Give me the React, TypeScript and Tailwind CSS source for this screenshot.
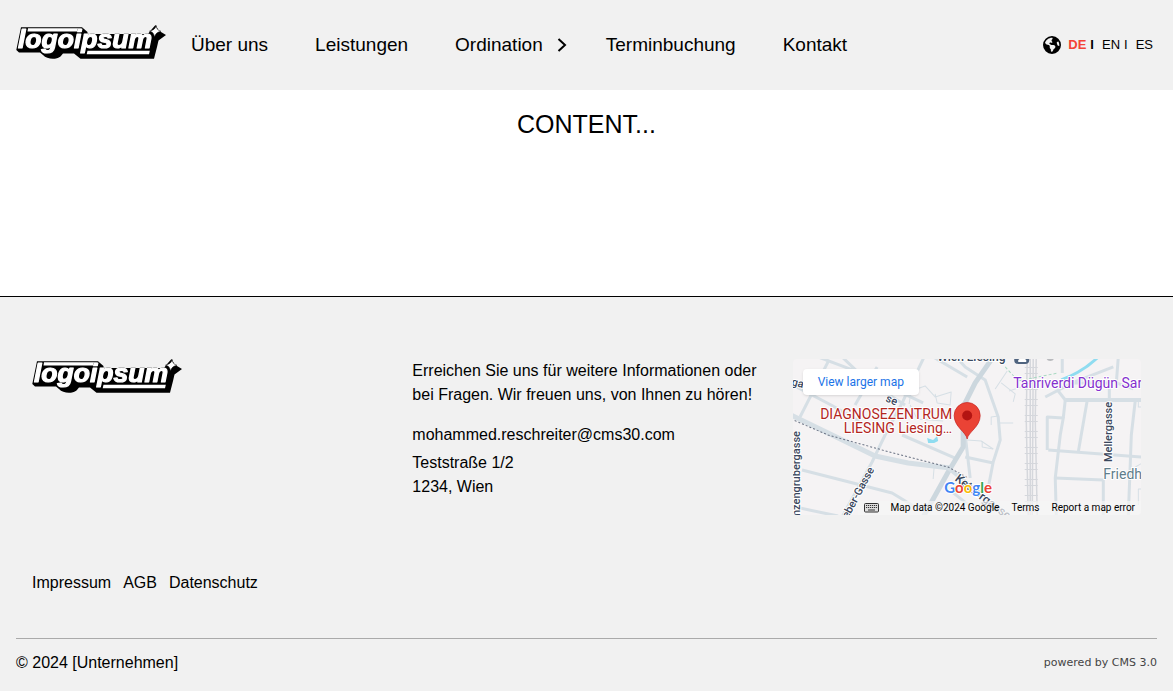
import React from 'react';
import { FaEarthAmericas } from 'react-icons/fa6';

const navItems = [
  { label: 'Über uns', href: '#ueber-uns' },
  { label: 'Leistungen', href: '#leistungen' },
  { label: 'Ordination', href: '#ordination', hasChildren: true },
  { label: 'Terminbuchung', href: '#terminbuchung' },
  { label: 'Kontakt', href: '#kontakt' },
];

const Logo: React.FC = () => (
  <svg viewBox="0 0 150 34" className="block w-[150px] h-[34px] shrink-0" role="img" aria-label="logoipsum">
    {/* extruded base */}
    <path
      d="M5 2.3H66L71.500 7V9H132L134 6.200 139.500 0 142.500 5.500 150 10 142.500 15.500 141 22 138 33.800H64.500L58 28.500H47L44.500 31.500C40 35 31 34.500 27 30L24 27.500H3L.3 25Z"
      fill="#000"
    />
    <path d="M12 3.300H65L64.300 6.500H11.500Z" fill="#fff" />
    <path d="M71.500 25.800H133.800L133 29.300H70.700Z" fill="#fff" />
    <text
      x="2"
      y="23.300"
      className="[filter:drop-shadow(0_0_0.5px_#000)]"
      fontFamily="'Liberation Sans', Arial, sans-serif"
      fontWeight="700"
      fontStyle="italic"
      fontSize="26.500"
      fill="#fff"
      stroke="#fff"
      strokeWidth="1.200"
      strokeLinejoin="round"
    >
      logoipsum
    </text>
    <path
      d="M140.300.6C140.500 3.500 141.500 5.200 145 6.300 141.500 7 139.500 8.500 138.500 12 137.800 8.500 137 7 133.500 6.200 137.500 5.200 139.300 3.800 140.300.6Z"
      fill="#fff"
      stroke="#000"
      strokeWidth=".5"
    />
  </svg>
);

const localRoads = [
  'M7 58 36 1',
  'M25 -2 62 12 130 44',
  'M49 -2 74 22 112 46',
  'M84 8 62 46',
  'M131 -2 110 42 92 76 79 103 49 158',
  'M0 26 38 46 66 62',
  'M140 -2 174 18',
  'M9 111 60 124 99 134 122 148',
  'M7 149 45 157',
  'M109 76 162 99',
  'M163 -2 172 8 192 21 205 58 207 81 200 103 195 129',
  'M172 98 200 104',
  'M172 76 177 119',
  'M254 91V58L270 59 267 76 262 119 263 156',
  'M255 91 349 98',
  'M272 41 270 59',
  'M262 119 310 121V156',
  'M294 41 285 93',
  'M342 41 338 76 335 156',
  'M325 -2 323 24 340 30',
  'M252 38 279 24 316 24V41',
  'M269 -2V14',
  'M265 32 272 41',
  'M279 24 320 8',
  'M158 132 178 148',
];

const footpaths = [
  'M116 45 118 32 132 27 142 38 158 33 157 46 144 44 142 35',
  'M117 46 124 60 150 62',
  'M205 64H220',
  'M198 66V58L205 57',
  'M174 81 188 82 200 90',
  'M189 82V88L200 90',
  'M141 108 140 120',
  'M202 30 214 12',
  'M208 24 222 35 220 43',
  'M216 32 228 28',
  'M349 48H345V40',
  'M349 104 342 108',
  'M349 130H345V146',
];

const LocationMap: React.FC = () => (
  <div className="relative h-[156px] overflow-hidden rounded bg-[#f5f3f4]">
    <svg
      viewBox="0 0 348 156"
      preserveAspectRatio="xMidYMid slice"
      className="block w-full h-full"
      role="img"
      aria-label="Karte"
      fontFamily="Roboto, sans-serif"
    >
      <g fill="none" stroke="#d6dfe5" strokeLinejoin="round">
        <g strokeWidth="1">
          {footpaths.map((d) => <path key={d} d={d} />)}
        </g>
        <g strokeWidth="3">
          {localRoads.map((d) => <path key={d} d={d} />)}
        </g>
        <path d="M-2 56 35 74 82 97 115 104 157 109" strokeWidth="5" />
        <path d="M130 158 155 113 170 88V48L182 24 200 -2" strokeWidth="5" stroke="#ccd7de" />
        <path d="M155 109 214 156" strokeWidth="4" />
        <path d="M272 41H349" strokeWidth="4" />
      </g>

      {/* railway */}
      <g fill="none" stroke="#d5d7dc">
        <path d="M234 -2 233 60 235 158M237 -2V158M240 -2 239 158M243 -2 242 60 244 158" strokeWidth="1.500" />
        <path d="M238 -2V158" strokeWidth="13" strokeDasharray="1 9 1 5" />
      </g>

      <path d="M268 21C278 17 290 12 304 -1" fill="none" stroke="#8fdcf0" strokeWidth="3" />
      <path d="M134 79 140 81 144 77 145 82 141 84H135Z" fill="#8fdcf0" />
      <path d="M212 8 225 22 265 14" fill="none" stroke="#a9d9c2" strokeDasharray="3 2" />
      <path d="M-2 60 35 76 100 94 155 108 175 119" fill="none" stroke="#6b7384" strokeDasharray="2 2" />

      <g
        fill="#3a475c"
        stroke="#fff"
        strokeWidth="2"
        strokeLinejoin="round"
        paintOrder="stroke"
        fontSize="11"
        fontWeight="500"
      >
        <text x="144" y="2" fontSize="12">Wien Liesing</text>
        <text x="-2" y="26" transform="rotate(15 -2 26)">ga</text>
        <text x="92" y="42" transform="rotate(24 92 42)">se</text>
        <text x="7" y="157" transform="rotate(-90 7 157)">nzengrubergasse</text>
        <text x="55" y="160" transform="rotate(-62 55 160)">eber-Gasse</text>
        <text x="161" y="121" transform="rotate(37 161 121)" fontSize="12">Ketzergasse</text>
        <text x="319" y="103" transform="rotate(-90 319 103)">Mellergasse</text>
        <text x="310" y="120" fontSize="14" fontWeight="400" fill="#607d8b">Friedh</text>
        <text x="220" y="29" fontSize="14" fontWeight="400" fill="#8430ce">Tanriverdi Dügün Sar</text>
        <g fontSize="14" fontWeight="400" fill="#b3261e" textAnchor="end">
          <text x="159" y="60">DIAGNOSEZENTRUM</text>
          <text x="159" y="74">LIESING Liesing…</text>
        </g>
      </g>

      {/* train stop */}
      <rect x="221" y="-9" width="15" height="14" rx="4" fill="#50647f" />
      <path d="M225 1 229 -2 233 1V3H225Z" fill="#fff" />
      <circle cx="257" cy="-2" r="4" fill="#b8babd" />

      <path
        d="M174 80C173 73 161 68 161 56.500A13 13 0 0 1 187 56.500C187 68 175 73 174 80Z"
        fill="#ea4335"
        stroke="#c5221f"
        strokeWidth=".7"
      />
      <circle cx="174" cy="56.500" r="5" fill="#b31412" />

      <text
        x="151"
        y="134"
        fontFamily="Lato, sans-serif"
        fontSize="15"
        fontWeight="700"
        stroke="#fff"
        strokeWidth="2"
        paintOrder="stroke"
      >
        <tspan fill="#4285f4">G</tspan>
        <tspan fill="#ea4335">o</tspan>
        <tspan fill="#fbbc04">o</tspan>
        <tspan fill="#4285f4">g</tspan>
        <tspan fill="#34a853">l</tspan>
        <tspan fill="#ea4335">e</tspan>
      </text>
    </svg>

    <a
      href="#karte"
      className="absolute left-[10px] top-[10px] h-[26px] px-[15px] rounded-sm bg-white shadow-sm font-[Roboto,sans-serif] text-[12px] leading-[26px] text-[#1a73e8]"
    >
      View larger map
    </a>

    <div className="absolute right-0 bottom-0 flex h-[14px] items-center font-[Roboto,sans-serif] text-[10px] leading-[14px] text-black">
      <button type="button" aria-label="Keyboard shortcuts" className="px-[6px] h-[14px] bg-[#f5f5f5]/70">
        <svg viewBox="0 0 15 10" className="block w-[15px] h-[10px]">
          <rect x=".5" y=".5" width="14" height="8.500" rx="1" fill="#ddd" stroke="#333" />
          <path
            d="M2 2.500H13M2 4.500H13"
            stroke="#333"
            strokeWidth="1.200"
            strokeDasharray="1.200 .8"
          />
          <path d="M4 7H11" stroke="#333" />
        </svg>
      </button>
      <span className="px-[6px] bg-[#f5f5f5]/70">Map data ©2024 Google</span>
      <a href="#terms" className="px-[6px] bg-[#f5f5f5]/70">Terms</a>
      <a href="#report" className="px-[6px] bg-[#f5f5f5]/70">Report a map error</a>
    </div>
  </div>
);

const Header: React.FC = () => (
  <header className="flex items-center justify-between bg-[#f1f1f1] pl-4 pr-5 py-[31px]">
    <div className="flex items-center gap-[25px]">
      <a href="#home" className="-mt-1.5">
        <Logo />
      </a>
      <nav className="flex items-center gap-[47px] text-[19px] leading-6">
        {navItems.map((item) => (
          <a key={item.label} href={item.href} className="flex items-center gap-[14px] whitespace-nowrap">
            {item.label}
            {item.hasChildren && (
              <svg viewBox="0 0 10 14" className="w-[10px] h-[14px] -mr-2" fill="none" stroke="#000" strokeWidth="2">
                <path d="M1.500 1 8 7 1.500 13" />
              </svg>
            )}
          </a>
        ))}
      </nav>
    </div>

    <div className="flex items-center text-[13px] leading-5">
      <FaEarthAmericas className="w-[18px] h-[18px] mr-[7px]" />
      <a href="#de" className="font-bold text-[#f44336]">DE</a>
      <span className="font-bold ml-1 mr-2">I</span>
      <a href="#en">EN</a>
      <span className="ml-1 mr-2">I</span>
      <a href="#es">ES</a>
    </div>
  </header>
);

const Footer: React.FC = () => (
  <footer className="border-t border-black bg-[#f1f1f1] px-4 pt-[62px] pb-4">
    <div className="grid grid-cols-3 gap-8 px-4">
      <Logo />
      <div className="leading-6">
        <p>Erreichen Sie uns für weitere Informationen oder bei Fragen. Wir freuen uns, von Ihnen zu hören!</p>
        <p className="mt-4">
          <a href="mailto:mohammed.reschreiter@cms30.com">mohammed.reschreiter@cms30.com</a>
        </p>
        <address className="mt-1 not-italic">
          Teststraße 1/2
          <br />
          1234, Wien
        </address>
      </div>
      <LocationMap />
    </div>

    <div className="flex gap-3 px-4 mt-14 leading-6">
      <a href="#impressum">Impressum</a>
      <a href="#agb">AGB</a>
      <a href="#datenschutz">Datenschutz</a>
    </div>

    <div className="flex items-center justify-between mt-[43px] pt-3 border-t border-[#aaa] leading-6">
      <p>© 2024 [Unternehmen]</p>
      <p className="font-[Verdana,'DejaVu_Sans',sans-serif] text-[11px] text-[#444]">powered by CMS 3.0</p>
    </div>
  </footer>
);

const App: React.FC = () => {
  return (
    <div className="font-['Liberation_Sans',Arial,sans-serif] text-base text-black bg-white">
      <Header />
      <main className="min-h-[206px] pt-4 text-center">
        <h1 className="text-[25px] leading-9">CONTENT...</h1>
      </main>
      <Footer />
    </div>
  );
};

export default App;
